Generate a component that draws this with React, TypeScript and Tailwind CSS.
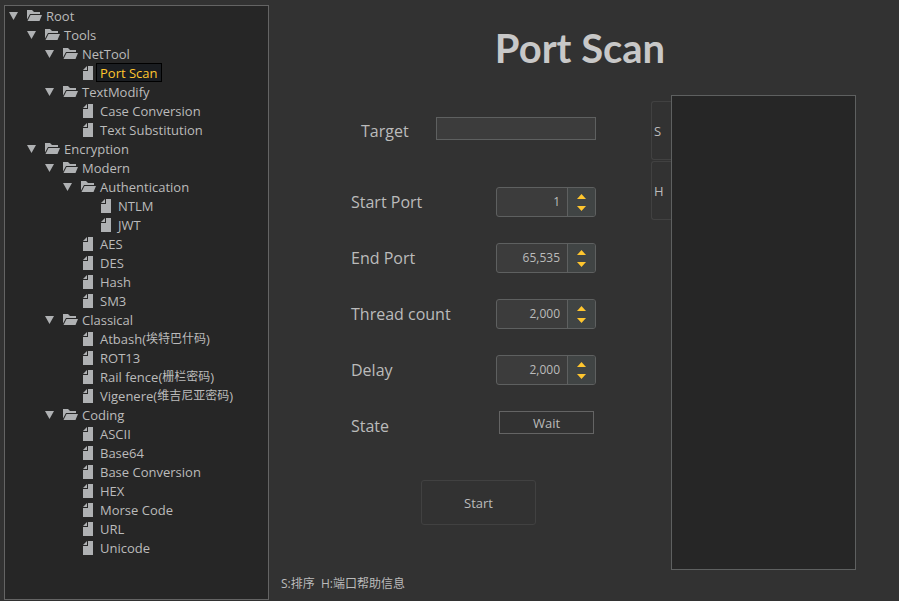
import { useState } from 'react';

type TreeNode = { label: string; cjk?: string; children?: TreeNode[] };

const tree: TreeNode = {
  label: 'Root',
  children: [
    {
      label: 'Tools',
      children: [
        { label: 'NetTool', children: [{ label: 'Port Scan' }] },
        { label: 'TextModify', children: [{ label: 'Case Conversion' }, { label: 'Text Substitution' }] },
      ],
    },
    {
      label: 'Encryption',
      children: [
        {
          label: 'Modern',
          children: [
            { label: 'Authentication', children: [{ label: 'NTLM' }, { label: 'JWT' }] },
            { label: 'AES' },
            { label: 'DES' },
            { label: 'Hash' },
            { label: 'SM3' },
          ],
        },
        {
          label: 'Classical',
          children: [
            { label: 'Atbash', cjk: '埃特巴什码' },
            { label: 'ROT13' },
            { label: 'Rail fence', cjk: '栅栏密码' },
            { label: 'Vigenere', cjk: '维吉尼亚密码' },
          ],
        },
        {
          label: 'Coding',
          children: [
            { label: 'ASCII' },
            { label: 'Base64' },
            { label: 'Base Conversion' },
            { label: 'HEX' },
            { label: 'Morse Code' },
            { label: 'URL' },
            { label: 'Unicode' },
          ],
        },
      ],
    },
  ],
};

function FolderIcon() {
  return (
    <svg width="15" height="11" viewBox="0 0 15 11" fill="#afb1b3" aria-hidden="true">
      <path d="M0 0h5l2 2h6v2H3L0 9.500z" />
      <path d="M3.500 5H15l-2.500 6H0.500z" />
    </svg>
  );
}

function FileIcon() {
  return (
    <svg width="10" height="14" viewBox="0 0 10 14" fill="#afb1b3" aria-hidden="true">
      <path d="M5 0h5v14H0V5h5z" />
      <path d="M4 0v4H0z" />
    </svg>
  );
}

function TreeItem({ node, selected, onSelect }: { node: TreeNode; selected: string; onSelect: (s: string) => void }) {
  const [open, setOpen] = useState(true);
  const active = node.label === selected;
  return (
    <li role="treeitem" aria-expanded={node.children ? open : undefined} aria-selected={active}>
      <div className="flex h-[19px] items-center">
        {node.children ? (
          <button aria-label={`Toggle ${node.label}`} onClick={() => setOpen(!open)} className="w-[18px] shrink-0">
            <svg width="9" height="8" viewBox="0 0 9 8" fill="#afb1b3" aria-hidden="true">
              <path d="M0 0h9L4.500 8z" />
            </svg>
          </button>
        ) : (
          <span className="w-[18px] shrink-0" />
        )}
        <span className="flex w-[15px] shrink-0 justify-end">{node.children ? <FolderIcon /> : <span className="pr-[3px]"><FileIcon /></span>}</span>
        <button
          onClick={() => onSelect(node.label)}
          className={
            active
              ? 'flex h-[19px] items-center whitespace-nowrap border border-black bg-[#1a1d21] px-[3px] text-[#ffc62e]'
              : 'flex h-[19px] items-center whitespace-nowrap border border-transparent px-[3px]'
          }
        >
          {node.label}
          {node.cjk && (
            <>
              (<span className="text-xs">{node.cjk}</span>)
            </>
          )}
        </button>
      </div>
      {node.children && open && (
        <ul role="group" className="pl-[18px]">
          {node.children.map((child) => (
            <TreeItem key={child.label} node={child} selected={selected} onSelect={onSelect} />
          ))}
        </ul>
      )}
    </li>
  );
}

function Spinner({ id, label, initial }: { id: string; label: string; initial: number }) {
  const [value, setValue] = useState(initial);
  return (
    <div className="flex h-[30px] items-center justify-between">
      <label htmlFor={id} className="text-base">
        {label}
      </label>
      <div className="flex h-[30px] w-[100px] overflow-hidden rounded-[3px] border border-[#5e6060] bg-[#3c3c3c]">
        <input
          id={id}
          inputMode="numeric"
          value={value.toLocaleString('en-US')}
          onChange={(e) => setValue(Number(e.target.value.replace(/\D/g, '')))}
          className="min-w-0 flex-1 bg-transparent pr-[7px] text-right text-xs outline-none"
        />
        <div className="flex w-7 flex-col items-center justify-center gap-[7px] border-l border-[#5e6060] bg-[#404444]">
          <button aria-label={`Increase ${label}`} onClick={() => setValue(value + 1)}>
            <svg width="9" height="5" viewBox="0 0 9 5" fill="#ffc62e" className="block" aria-hidden="true">
              <path d="M0 5h9L4.500 0z" />
            </svg>
          </button>
          <button aria-label={`Decrease ${label}`} onClick={() => setValue(Math.max(0, value - 1))}>
            <svg width="9" height="5" viewBox="0 0 9 5" fill="#ffc62e" className="block" aria-hidden="true">
              <path d="M0 0h9L4.500 5z" />
            </svg>
          </button>
        </div>
      </div>
    </div>
  );
}

export default function App() {
  const [selected, setSelected] = useState('Port Scan');
  return (
    <div className="flex min-h-screen bg-[#323232] font-['Open_Sans','Noto_Sans_CJK_SC',sans-serif] text-[13px] leading-4 text-[#bbbbbb]">
      <nav aria-label="Tools" className="mt-[5px] mb-px ml-1 w-[265px] shrink-0 border border-[#646464] bg-[#262626] pl-1">
        <ul role="tree">
          <TreeItem node={tree} selected={selected} onSelect={setSelected} />
        </ul>
      </nav>

      <main className="flex min-w-0 flex-1 flex-col">
        <h1 className="flex h-[95px] items-center justify-center pr-2 font-['Lato',sans-serif] text-[40px] font-bold text-[#c8c8c8]">
          Port Scan
        </h1>

        <div className="flex flex-1 pr-[43px] pl-[82px]">
          <form className="flex w-[245px] shrink-0 flex-col pt-[22px]" onSubmit={(e) => e.preventDefault()}>
            <div className="flex items-start justify-between pl-2.5">
              <label htmlFor="target" className="pt-1.5 text-base leading-4">
                Target
              </label>
              <input id="target" className="h-[23px] w-[160px] border border-[#5e6060] bg-[#3c3c3c] px-1.5 outline-none" />
            </div>
            <div className="mt-[47px] flex flex-col gap-[26px]">
              <Spinner id="start-port" label="Start Port" initial={1} />
              <Spinner id="end-port" label="End Port" initial={65535} />
              <Spinner id="threads" label="Thread count" initial={2000} />
              <Spinner id="delay" label="Delay" initial={2000} />
              <div className="flex h-[30px] items-start justify-between pr-0.5">
                <label htmlFor="state" className="self-center text-base">
                  State
                </label>
                <input
                  id="state"
                  readOnly
                  defaultValue="Wait"
                  className="h-[23px] w-[95px] border border-[#646464] bg-transparent text-center text-[13px] outline-none"
                />
              </div>
            </div>
            <button className="mt-[39px] ml-[70px] h-[45px] w-[115px] rounded-[3px] border border-[#414141] text-[13px]">Start</button>
          </form>

          <div className="ml-[55px] flex w-5 shrink-0 flex-col gap-px pt-1.5">
            <button className="h-[59px] rounded-l-[3px] border border-r-0 border-[#414141] pl-0.5 text-left text-[13px]">S</button>
            <button className="h-[59px] rounded-l-[3px] border border-r-0 border-[#414141] pl-0.5 text-left text-[13px]">H</button>
          </div>
          <textarea
            aria-label="Scan output"
            readOnly
            className="block min-w-0 flex-1 resize-none border border-[#5e6060] bg-[#262626] p-1 outline-none"
          />
        </div>

        <footer className="h-[31px] pt-1.5 pl-3 text-xs whitespace-pre">S:排序  H:端口帮助信息</footer>
      </main>
    </div>
  );
}
